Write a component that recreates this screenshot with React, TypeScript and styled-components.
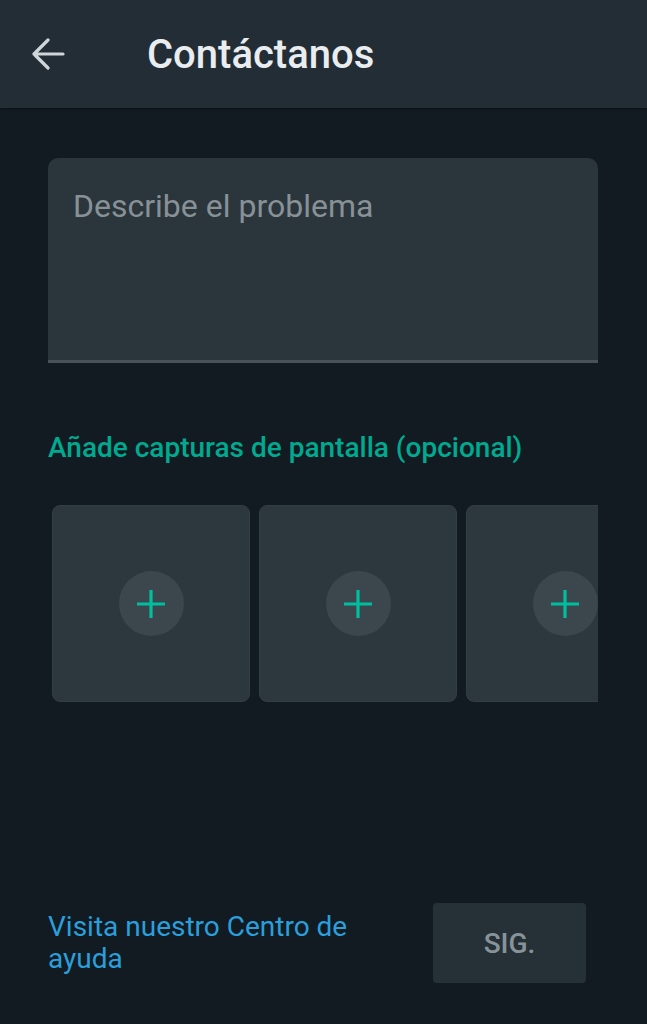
import React from "react";
import styled, { createGlobalStyle } from "styled-components";

const Global = createGlobalStyle`
  html, body { margin: 0; padding: 0; background: #111b21; }
  body { font-family: Roboto, "Noto Sans", "Liberation Sans", sans-serif; }
  * { box-sizing: border-box; }
`;

const Page = styled.div`
  min-height: 1024px;
  display: flex;
  flex-direction: column;
  background: #111b21;
`;

const Header = styled.header`
  height: 108px;
  background: #232d36;
  display: flex;
  align-items: center;
  padding-left: 30px;
  box-shadow: 0 1px 2px rgba(0, 0, 0, 0.4);
`;

const BackButton = styled.button`
  width: 36px;
  height: 36px;
  padding: 0;
  border: none;
  background: transparent;
  display: flex;
  align-items: center;
  justify-content: center;
  color: #d1d7db;
`;

const Title = styled.h1`
  margin: 0 0 0 81px;
  font-size: 40px;
  font-weight: 500;
  color: #e9edef;
`;

const Content = styled.main`
  display: flex;
  flex-direction: column;
  padding: 50px 49px 0 48px;
`;

const TextArea = styled.div`
  height: 205px;
  background: #2b353c;
  border-radius: 10px 10px 0 0;
  border-bottom: 3px solid #485258;
  padding: 29px 25px;
  font-size: 32px;
  color: #879196;
`;

const Label = styled.div`
  margin-top: 68px;
  font-size: 28px;
  font-weight: 500;
  color: #00a98f;
`;

const Tiles = styled.div`
  margin-top: 41px;
  display: flex;
  gap: 9px;
  overflow: hidden;
  padding-left: 4px;
`;

const Tile = styled.div`
  flex: 0 0 198px;
  height: 197px;
  background: #2c373e;
  border: 1px solid #323d44;
  border-radius: 8px;
  display: flex;
  align-items: center;
  justify-content: center;
`;

const AddCircle = styled.div`
  width: 65px;
  height: 65px;
  border-radius: 50%;
  background: #3b464d;
  display: flex;
  align-items: center;
  justify-content: center;
`;

const Footer = styled.footer`
  margin-top: auto;
  display: flex;
  align-items: center;
  justify-content: space-between;
  padding: 0 61px 41px 48px;
`;

const HelpLink = styled.a`
  width: 340px;
  font-size: 28px;
  line-height: 32px;
  color: #2a9fdc;
  text-decoration: none;
`;

const NextButton = styled.button`
  width: 153px;
  height: 80px;
  border: none;
  border-radius: 4px;
  background: #263037;
  color: #889399;
  font-family: Roboto, "Noto Sans", sans-serif;
  font-size: 28px;
  font-weight: 500;
`;

const Plus = () => (
  <svg width="30" height="30" viewBox="0 0 30 30">
    <path d="M15 1v28M1 15h28" stroke="#00bfa0" strokeWidth="3.2" fill="none" />
  </svg>
);

export default function App() {
  return (
    <Page>
      <Global />
      <Header>
        <BackButton aria-label="Atrás">
          <svg width="34" height="32" viewBox="0 0 34 32" fill="none">
            <path d="M32 16H3M17 2L3 16l14 14" stroke="#cfd5d8" strokeWidth="3.2" strokeLinecap="round" strokeLinejoin="round" />
          </svg>
        </BackButton>
        <Title>Contáctanos</Title>
      </Header>
      <Content>
        <TextArea>Describe el problema</TextArea>
        <Label>Añade capturas de pantalla (opcional)</Label>
        <Tiles>
          {[0, 1, 2].map((i) => (
            <Tile key={i}>
              <AddCircle>
                <Plus />
              </AddCircle>
            </Tile>
          ))}
        </Tiles>
      </Content>
      <Footer>
        <HelpLink href="#">Visita nuestro Centro de ayuda</HelpLink>
        <NextButton>SIG.</NextButton>
      </Footer>
    </Page>
  );
}
